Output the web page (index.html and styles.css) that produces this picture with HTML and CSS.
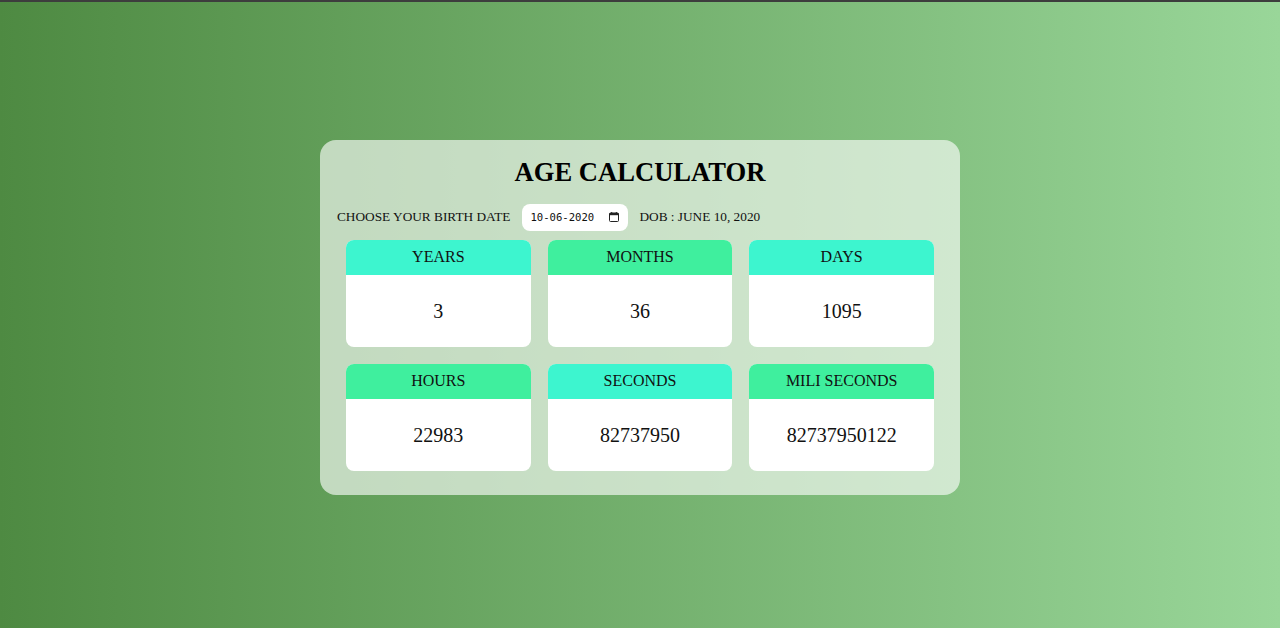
FILE: index.html
```html
<!DOCTYPE html>
<html>
<head>
<meta charset="utf-8">
<link rel="stylesheet" href="styles.css">
</head>
<body>
<div class="topbar"></div>
<main class="page">
  <section class="card">
    <h1 class="title">AGE CALCULATOR</h1>
    <div class="controls">
      <span class="label">CHOOSE YOUR BIRTH DATE</span>
      <div class="date">
        <span class="date-text">10-06-2020</span>
        <svg class="cal" width="10" height="10" viewBox="0 0 10 10" aria-hidden="true">
          <rect x="0.5" y="1" width="9" height="8.5" rx="1" fill="none" stroke="#222" stroke-width="1"/>
          <rect x="0.5" y="1" width="9" height="2.2" fill="#222"/>
          <rect x="2.2" y="0" width="1" height="1.5" fill="#222"/>
          <rect x="6.8" y="0" width="1" height="1.5" fill="#222"/>
        </svg>
      </div>
      <span class="dob">DOB : JUNE 10, 2020</span>
    </div>
    <div class="grid">
      <div class="box"><div class="head cyan">YEARS</div><div class="val">3</div></div>
      <div class="box"><div class="head green">MONTHS</div><div class="val">36</div></div>
      <div class="box"><div class="head cyan">DAYS</div><div class="val">1095</div></div>
      <div class="box"><div class="head green">HOURS</div><div class="val">22983</div></div>
      <div class="box"><div class="head cyan">SECONDS</div><div class="val">82737950</div></div>
      <div class="box"><div class="head green">MILI SECONDS</div><div class="val">82737950122</div></div>
    </div>
  </section>
</main>
</body>
</html>
```

FILE: styles.css
```css
html, body {
  margin: 0;
  padding: 0;
  height: 100%;
}
body {
  font-family: "Liberation Serif", "Times New Roman", serif;
  color: #111;
  background: linear-gradient(to right, #4e8a42, #99d699);
  display: flex;
  flex-direction: column;
  overflow: hidden;
}
.topbar {
  height: 2px;
  background: #3d3d3d;
  flex: none;
}
.page {
  flex: 1;
  display: flex;
  justify-content: center;
  padding-top: 138px;
}
.card {
  width: 640px;
  height: 355px;
  box-sizing: border-box;
  background: rgba(255, 255, 255, 0.62);
  border-radius: 16px;
  padding: 16px 26px 24px;
}
.title {
  margin: 0;
  text-align: center;
  font-size: 26.6px;
  font-weight: bold;
  line-height: 32px;
  color: #000;
}
.controls {
  display: flex;
  align-items: center;
  margin: 15px 0 9px -9px;
  height: 28px;
  font-size: 13.3px;
  color: #111;
}
.label {
  margin-right: 12px;
}
.date {
  width: 106px;
  height: 27px;
  box-sizing: border-box;
  border-radius: 8px;
  background: #fff;
  display: flex;
  align-items: center;
  padding: 0 9px 0 8px;
  margin-right: 11px;
}
.date-text {
  font-family: "DejaVu Sans Mono", monospace;
  font-size: 10.6px;
  color: #111;
  flex: 1;
}
.cal {
  display: block;
}
.grid {
  display: grid;
  grid-template-columns: repeat(3, 1fr);
  column-gap: 17px;
  row-gap: 17px;
}
.box {
  height: 107px;
  border-radius: 8px;
  overflow: hidden;
  background: #fff;
  display: flex;
  flex-direction: column;
}
.head {
  height: 35px;
  box-sizing: border-box;
  padding-bottom: 2px;
  display: flex;
  align-items: center;
  justify-content: center;
  font-size: 16px;
  color: #111;
}
.cyan { background: #3df5cf; }
.green { background: #3fef9e; }
.val {
  flex: 1;
  display: flex;
  align-items: center;
  justify-content: center;
  font-size: 20px;
  color: #111;
}
```
